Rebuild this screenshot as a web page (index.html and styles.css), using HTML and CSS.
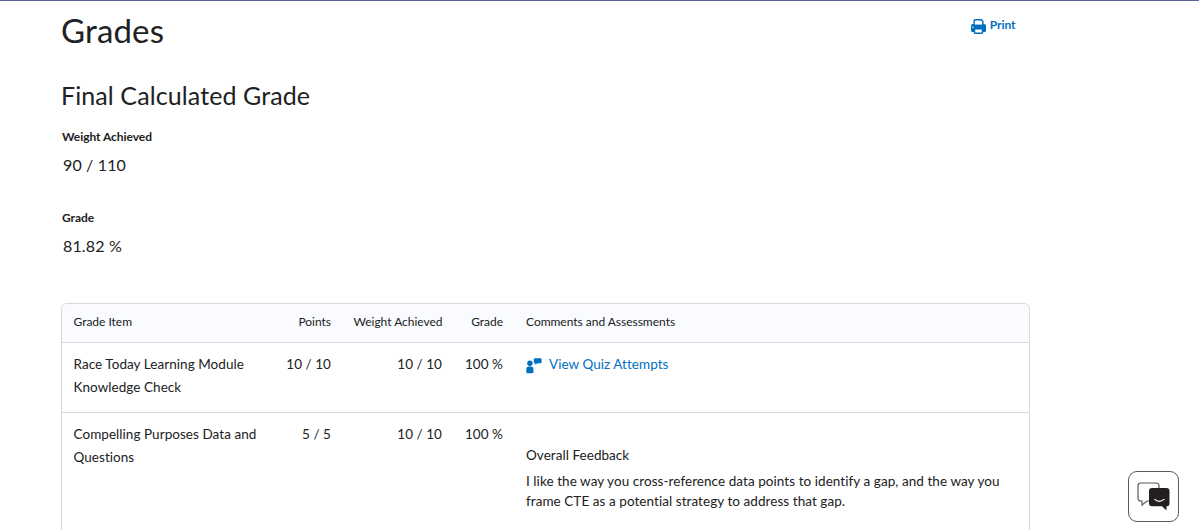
FILE: index.html
```html
<!DOCTYPE html>
<html lang="en">
<head>
<meta charset="utf-8">
<title>Grades</title>
<link rel="stylesheet" href="styles.css">
</head>
<body>
<main class="page">
  <header class="top">
    <h1 class="title">Grades</h1>
    <a class="print">
      <svg class="print-icon" width="15" height="15" viewBox="0 0 15 15">
        <path d="M3.200 6V1.600Q3.200 .8 4 .8H10.200L11.800 2.300V6" fill="#fff" stroke="currentColor" stroke-width="1.500"/>
        <path d="M1.800 5H13.200Q15 5.200 15 7V11.500Q15 13 13.500 13H1.500Q0 13 0 11.500V7Q0 5.200 1.800 5Z" fill="currentColor"/>
        <path d="M3.900 2.500H11V5.600H3.900Z" fill="#fff"/>
        <path d="M3.500 9.800H11.500V13.400Q11.500 14.200 10.700 14.200H4.300Q3.500 14.200 3.500 13.400Z" fill="#fff" stroke="currentColor" stroke-width="1.500"/>
        <circle cx="1.900" cy="8.200" r=".8" fill="#fff"/>
      </svg>
      <span>Print</span>
    </a>
  </header>
  <h2 class="subtitle">Final Calculated Grade</h2>
  <section class="stat">
    <div class="label">Weight Achieved</div>
    <div class="value">90 / 110</div>
  </section>
  <section class="stat">
    <div class="label">Grade</div>
    <div class="value">81.82 %</div>
  </section>
  <div class="table">
    <div class="row head">
      <div class="cell">Grade Item</div>
      <div class="cell num">Points</div>
      <div class="cell num">Weight Achieved</div>
      <div class="cell num">Grade</div>
      <div class="cell">Comments and Assessments</div>
    </div>
    <div class="row first">
      <div class="cell">Race Today Learning Module<br>Knowledge Check</div>
      <div class="cell num">10 / 10</div>
      <div class="cell num">10 / 10</div>
      <div class="cell num">100 %</div>
      <div class="cell">
        <a class="attempts">
          <svg class="quiz-icon" width="16" height="16" viewBox="0 0 16 16" fill="currentColor">
            <circle cx="3.900" cy="5.200" r="2.700"/>
            <path d="M2.300 8.600H5.300Q7.400 8.800 7.400 11V14Q7.400 15.200 6.200 15.200H1.500Q.3 15.200 .3 14V11Q.3 8.800 2.300 8.600Z"/>
            <path d="M8.600 .3H14.600Q15.600 .3 15.600 1.300V4.300Q15.600 5.300 14.600 5.300H11.200L9.300 7.100V5.300H8.600Q7.800 5.300 7.800 4.300V1.300Q7.800 .3 8.600 .3Z"/>
          </svg>
          <span>View Quiz Attempts</span>
        </a>
      </div>
    </div>
    <div class="row second">
      <div class="cell">Compelling Purposes Data and<br>Questions</div>
      <div class="cell num">5 / 5</div>
      <div class="cell num">10 / 10</div>
      <div class="cell num">100 %</div>
      <div class="cell feedback">
        <div>Overall Feedback</div>
        <p class="fb-text">I like the way you cross-reference data points to identify a gap, and the way you<br>frame CTE as a potential strategy to address that gap.</p>
      </div>
    </div>
  </div>
</main>
<button class="chat" aria-label="Chat">
  <svg width="34" height="30" viewBox="0 0 34 30">
    <path d="M4 1H19Q22 1 22 4V16Q22 19 19 19H10L5 23V19H4Q1 19 1 16V4Q1 1 4 1Z" fill="#fff" stroke="#5b595a" stroke-width="1.200"/>
    <path d="M15 6H29.500Q32.500 6 32.500 9V21.500Q32.500 24.300 30 24.300H29.500V28.500L25 24.300H15Q12 24.300 12 21.300V9Q12 6 15 6Z" fill="#231f20"/>
    <path d="M17.700 17.400Q22.300 21.300 27 17.400" fill="none" stroke="#fff" stroke-width="1.200" stroke-linecap="round"/>
  </svg>
</button>
</body>
</html>
```
FILE: styles.css
```css
* { box-sizing: border-box; }
body {
  margin: 0;
  height: 530px;
  overflow: hidden;
  background: #fff;
  color: #202122;
  font-family: Lato, "Liberation Sans", sans-serif;
  border-top: 1px solid #5c6299;
}
.page { width: 969px; height: 529px; margin-left: 61px; overflow: hidden; }
.top { display: flex; justify-content: space-between; height: 59px; padding-right: 14.500px; }
.title { margin: 9px 0 0; font-size: 33px; line-height: 40px; font-weight: 400; letter-spacing: .15px; }
.print { display: flex; gap: 4px; height: 16px; margin-top: 16px; color: #006fbf; font-size: 12px; line-height: 16px; font-weight: 700; letter-spacing: -.05px; }
.print-icon { margin-top: 2px; }
.subtitle { margin: 19px 0 0; font-size: 25px; line-height: 32px; font-weight: 400; letter-spacing: .1px; }
.stat { height: 81px; padding: 18px 0 0 1px; }
.label { font-size: 12px; line-height: 16px; font-weight: 700; letter-spacing: -.05px; }
.value { margin: 10px 0 0 1px; font-size: 16px; line-height: 20px; letter-spacing: .15px; }
.table { margin-top: 30px; height: 227px; border: 1px solid #d6dae0; border-bottom: 0; border-radius: 6px 6px 0 0; overflow: hidden; }
.row { display: grid; grid-template-columns: 191.500px 88.500px 111px 61px 1fr; border-bottom: 1px solid #d5d9de; }
.cell { padding: 0 11px 0 11.500px; white-space: nowrap; }
.cell:last-child { padding-left: 12px; }
.num { text-align: right; }
.head { height: 39px; background: #f9fbff; font-size: 12px; line-height: 36px; letter-spacing: -.02px; }
.first, .second { font-size: 13.500px; line-height: 23px; letter-spacing: .05px; }
.first { height: 70px; padding-top: 10px; }
.second { height: 117px; padding-top: 10px; border-bottom: 0; }
.attempts { display: flex; gap: 7px; color: #006fbf; }
.quiz-icon { margin-top: 5px; }
.feedback { padding-top: 22px; line-height: 20px; }
.fb-text { margin: 7px 0 0; line-height: 19.500px; letter-spacing: .06px; }
.chat { position: fixed; left: 1128px; top: 471px; width: 51px; height: 51px; padding: 0; display: grid; place-items: center; background: #fff; border: 1px solid #5b595a; border-radius: 9px; }
```
